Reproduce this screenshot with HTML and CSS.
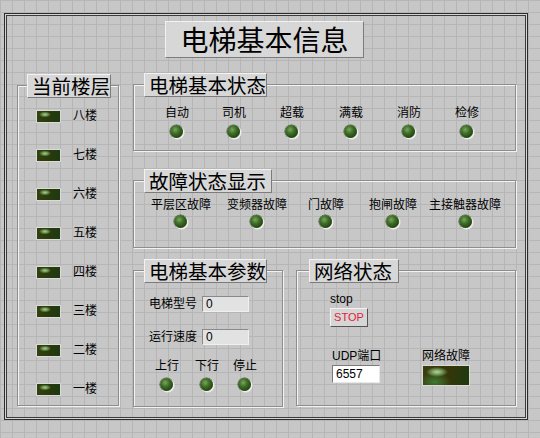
FILE: index.html
```html
<!DOCTYPE html>
<html lang="zh-CN">
<head>
<meta charset="utf-8">
<title>电梯基本信息</title>
<link rel="stylesheet" href="styles.css">
</head>
<body>
<div class="panel">
  <div class="title">电梯基本信息</div>
  <div class="main">
    <div class="group floors">
      <div class="legend lg-floors">当前楼层</div>
      <div class="floor-list">
        <div class="floor"><span class="led-rect"></span><span class="floor-name">八楼</span></div>
        <div class="floor"><span class="led-rect"></span><span class="floor-name">七楼</span></div>
        <div class="floor"><span class="led-rect"></span><span class="floor-name">六楼</span></div>
        <div class="floor"><span class="led-rect"></span><span class="floor-name">五楼</span></div>
        <div class="floor"><span class="led-rect"></span><span class="floor-name">四楼</span></div>
        <div class="floor"><span class="led-rect"></span><span class="floor-name">三楼</span></div>
        <div class="floor"><span class="led-rect"></span><span class="floor-name">二楼</span></div>
        <div class="floor"><span class="led-rect"></span><span class="floor-name">一楼</span></div>
      </div>
    </div>
    <div class="right">
      <div class="group status">
        <div class="legend lg-status">电梯基本状态</div>
        <div class="ind-grid status-grid">
          <div class="ind"><span class="lbl">自动</span><span class="led"></span></div>
          <div class="ind"><span class="lbl">司机</span><span class="led"></span></div>
          <div class="ind"><span class="lbl">超载</span><span class="led"></span></div>
          <div class="ind"><span class="lbl">满载</span><span class="led"></span></div>
          <div class="ind"><span class="lbl">消防</span><span class="led"></span></div>
          <div class="ind"><span class="lbl">检修</span><span class="led"></span></div>
        </div>
      </div>
      <div class="group faults">
        <div class="legend lg-faults">故障状态显示</div>
        <div class="ind-grid fault-grid">
          <div class="ind"><span class="lbl">平层区故障</span><span class="led"></span></div>
          <div class="ind"><span class="lbl">变频器故障</span><span class="led"></span></div>
          <div class="ind"><span class="lbl">门故障</span><span class="led"></span></div>
          <div class="ind"><span class="lbl">抱闸故障</span><span class="led"></span></div>
          <div class="ind"><span class="lbl">主接触器故障</span><span class="led"></span></div>
        </div>
      </div>
      <div class="bottom">
        <div class="group params">
          <div class="legend lg-params">电梯基本参数</div>
          <div class="param-row first">
            <span class="param-label">电梯型号</span>
            <span class="num-field">0</span>
          </div>
          <div class="param-row second">
            <span class="param-label">运行速度</span>
            <span class="num-field">0</span>
          </div>
          <div class="ind-grid dir-grid">
            <div class="ind"><span class="lbl">上行</span><span class="led"></span></div>
            <div class="ind"><span class="lbl">下行</span><span class="led"></span></div>
            <div class="ind"><span class="lbl">停止</span><span class="led"></span></div>
          </div>
        </div>
        <div class="group network">
          <div class="legend lg-network">网络状态</div>
          <div class="net-body">
            <div class="lbl">stop</div>
            <div class="stop-btn">STOP</div>
            <div class="net-row">
              <div class="net-col udp">
                <div class="lbl">UDP端口</div>
                <div class="port-field">6557</div>
              </div>
              <div class="net-col">
                <div class="lbl">网络故障</div>
                <div class="led-rect big"></div>
              </div>
            </div>
          </div>
        </div>
      </div>
    </div>
  </div>
</div>
</body>
</html>
```

FILE: styles.css
```css
html, body {
  margin: 0;
  padding: 0;
}
body {
  width: 540px;
  height: 438px;
  overflow: hidden;
  background-color: #c7c7c7;
  background-image:
    linear-gradient(#b6b6b6 1px, transparent 1px),
    linear-gradient(90deg, #b6b6b6 1px, transparent 1px);
  background-size: 12px 12px;
  font-family: "Liberation Sans", "Noto Sans CJK SC", sans-serif;
  color: #000;
}
.panel {
  box-sizing: border-box;
  margin: 13px 0 0 4px;
  width: 524px;
  height: 407px;
  border: 1px solid #2c2c2c;
  box-shadow: inset 0 0 0 1px #d4d4d4, inset 0 0 0 2px #3c3c3c;
  overflow: hidden;
}
.title {
  box-sizing: border-box;
  margin: 7px 0 0 160px;
  width: 199px;
  height: 37px;
  background: #d7d7d7;
  border: 1px solid;
  border-color: #f2f2f2 #7c7c7c #7c7c7c #f2f2f2;
  font-family: "Noto Sans CJK SC", sans-serif;
  font-size: 28px;
  line-height: 34px;
  text-align: center;
  letter-spacing: 0;
}
.main {
  display: flex;
  align-items: flex-start;
  margin: 27px 0 0 12px;
}
.group {
  box-sizing: border-box;
  border: 1px solid #8e8e8e;
  box-shadow: inset 1px 1px 0 #f2f2f2, 1px 1px 0 #f2f2f2;
}
.legend {
  box-sizing: border-box;
  height: 24px;
  margin-top: -12px;
  margin-left: 10px;
  padding-left: 4px;
  background: #d7d7d7;
  border: 1px solid;
  border-color: #f2f2f2 #7c7c7c #7c7c7c #f2f2f2;
  font-family: "Noto Sans CJK SC", sans-serif;
  font-size: 19.5px;
  line-height: 21px;
  white-space: nowrap;
}
.lg-floors { width: 84px; margin-left: 9px; }
.lg-status { width: 123px; }
.lg-faults { width: 128px; }
.lg-params { width: 123px; }
.lg-network { width: 90px; margin-left: 12px; }

/* floors */
.floors {
  width: 102px;
  height: 321px;
}
.floor-list {
  display: flex;
  flex-direction: column;
  gap: 26px;
  margin-top: 12px;
  padding-left: 18px;
}
.floor {
  display: flex;
  align-items: center;
  height: 13px;
}
.floor-name {
  margin-left: 12px;
  font-size: 12px;
  line-height: 13px;
}
.led-rect {
  box-sizing: border-box;
  display: block;
  width: 25px;
  height: 13px;
  border: 1px solid #dadada;
  background:
    radial-gradient(ellipse 6px 3px at 8px 3.5px, #a9cc93 0%, #6f9a56 45%, rgba(60,90,30,0) 100%),
    linear-gradient(100deg, #34420f 0%, #2a3a0c 50%, #1c3a12 100%);
}
.led-rect.big {
  width: 48px;
  height: 21px;
  margin-top: 1px;
  background:
    radial-gradient(ellipse 11px 5px at 14px 6px, #b3d2a0 0%, #7ea866 40%, rgba(60,100,40,0) 100%),
    radial-gradient(ellipse 16px 9px at 12px 16px, #3f7a36 0%, rgba(40,90,30,0) 100%),
    linear-gradient(100deg, #3a3e0e 0%, #35360a 55%, #1e3a10 100%);
}

/* right column */
.right {
  margin: -1px 0 0 14px;
  width: 383px;
}
.status {
  height: 67px;
}
.faults {
  height: 68px;
  margin-top: 29px;
}
.ind-grid {
  display: grid;
  justify-items: center;
}
.status-grid {
  grid-template-columns: 58px 56px 60px 58px 58px 58px;
  margin-top: 8px;
  padding-left: 14px;
}
.status-grid .led { margin-top: 4px; }
.fault-grid {
  grid-template-columns: 64px 88px 50px 84px 60px;
  margin-top: 4px;
  padding-left: 15px;
}
.fault-grid .led { margin-top: 2px; }
.ind {
  display: flex;
  flex-direction: column;
  align-items: center;
}
.lbl {
  font-size: 12px;
  line-height: 16px;
  white-space: nowrap;
}
.led {
  display: block;
  width: 13px;
  height: 13px;
  border-radius: 50%;
  background: radial-gradient(circle at 40% 36%, #7aa65e 0%, #3f6e28 35%, #24480f 70%, #16300a 100%);
  box-shadow: 1px 1px 0 0.5px #ececec, 0 0 0 0.5px #4a5a40;
}

/* bottom row */
.bottom {
  display: flex;
  align-items: flex-start;
  margin-top: 22px;
}
.params {
  width: 150px;
  height: 137px;
}
.network {
  width: 220px;
  height: 136px;
  margin-left: 13px;
}
.param-row {
  display: flex;
  align-items: center;
  height: 16px;
  padding-left: 13px;
}
.param-row.first { margin-top: 13px; }
.param-row.second { margin-top: 17px; }
.param-label {
  width: 50px;
  text-align: right;
  font-size: 12px;
  line-height: 16px;
  white-space: nowrap;
}
.num-field {
  box-sizing: border-box;
  margin-left: 5px;
  width: 47px;
  height: 16px;
  padding-left: 3px;
  background: #e2e2e2;
  border: 1px solid;
  border-color: #8a8a8a #f0f0f0 #f0f0f0 #8a8a8a;
  font-size: 12px;
  line-height: 14px;
}
.dir-grid {
  grid-template-columns: 40px 40px 36px;
  margin-top: 13px;
  padding-left: 13px;
}
.dir-grid .led { margin-top: 4px; }

.net-body {
  padding-left: 33px;
  margin-top: 8px;
}
.stop-btn {
  box-sizing: border-box;
  margin-top: 1px;
  width: 38px;
  height: 19px;
  background: #d6d6d6;
  border: 1px solid;
  border-color: #f4f4f4 #555 #555 #f4f4f4;
  color: #e4203c;
  font-size: 11px;
  line-height: 17px;
  text-align: center;
}
.net-row {
  display: flex;
  margin-top: 21px;
}
.net-col.udp {
  width: 90px;
  margin-left: 2px;
}
.port-field {
  box-sizing: border-box;
  margin-top: 1px;
  width: 48px;
  height: 18px;
  padding-left: 3px;
  background: #fff;
  border: 1px solid;
  border-color: #7a7a7a #e8e8e8 #e8e8e8 #7a7a7a;
  font-size: 12px;
  line-height: 16px;
}
```
